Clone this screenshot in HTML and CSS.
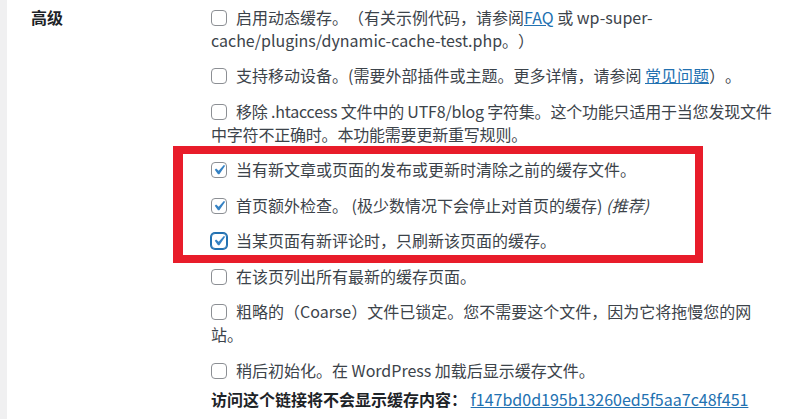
FILE: index.html
```html
<!DOCTYPE html>
<html lang="zh-CN">
<head>
<meta charset="utf-8">
<title>高级</title>
<link rel="stylesheet" href="styles.css">
</head>
<body>
<div class="page">
  <div class="row">
    <div class="th">高级</div>
    <div class="td">
      <label class="opt"><span class="cb"></span><span>启用动态缓存。（有关示例代码，请参阅</span><a href="#">FAQ</a><span> 或 wp-super-</span><span>cache/plugins/dynamic-cache-test.php。）</span></label>
      <label class="opt"><span class="cb"></span>支持移动设备。(需要外部插件或主题。更多详情，请参阅 <a href="#">常见问题</a>）。</label>
      <label class="opt tight"><span class="cb"></span>移除 .htaccess 文件中的 UTF8/blog 字符集。这个功能只适用于当您发现文件中字符不正确时。本功能需要更新重写规则。</label>
      <label class="opt"><span class="cb checked"><svg viewBox="0 0 20 20"><path d="M14.83 4.89l1.34.94-5.81 8.38H9.02L5.78 9.67l1.34-1.25 2.57 2.4z"/></svg></span>当有新文章或页面的发布或更新时清除之前的缓存文件。</label>
      <label class="opt"><span class="cb checked"><svg viewBox="0 0 20 20"><path d="M14.83 4.89l1.34.94-5.81 8.38H9.02L5.78 9.67l1.34-1.25 2.57 2.4z"/></svg></span>首页额外检查。 (极少数情况下会停止对首页的缓存) <em>(推荐)</em></label>
      <label class="opt"><span class="cb checked focus"><svg viewBox="0 0 20 20"><path d="M14.83 4.89l1.34.94-5.81 8.38H9.02L5.78 9.67l1.34-1.25 2.57 2.4z"/></svg></span>当某页面有新评论时，只刷新该页面的缓存。</label>
      <label class="opt"><span class="cb"></span>在该页列出所有最新的缓存页面。</label>
      <label class="opt"><span class="cb"></span>粗略的（Coarse）文件已锁定。您不需要这个文件，因为它将拖慢您的网站。</label>
      <label class="opt"><span class="cb"></span>稍后初始化。在 WordPress 加载后显示缓存文件。</label>
      <p class="note"><strong>访问这个链接将不会显示缓存内容：</strong> <a href="#">f147bd0d195b13260ed5f5aa7c48f451</a></p>
    </div>
  </div>
  <div class="highlight"></div>
</div>
</body>
</html>
```
FILE: styles.css
```css
html, body {
  margin: 0;
  padding: 0;
  background: #ffffff;
}
body {
  font-family: "Noto Sans CJK SC", sans-serif;
  font-size: 16px;
  line-height: 23px;
  color: #3c434a;
  text-spacing-trim: space-all;
}
.page {
  position: relative;
  height: 419px;
  overflow: hidden;
  border-left: 7px solid #f0f0f1;
}
.row {
  display: flex;
  padding-top: 5.5px;
}
.th {
  width: 180px;
  padding-left: 24px;
  flex: none;
  font-weight: 700;
  color: #1d2327;
}
.td {
  width: 565px;
  flex: none;
}
.opt {
  display: block;
  margin-bottom: 12.5px;
}
.tight {
  letter-spacing: -0.2px;
}
.cb {
  display: inline-block;
  box-sizing: border-box;
  width: 16px;
  height: 16px;
  border: 1px solid #8c8f94;
  border-radius: 4px;
  background: #fff;
  margin-right: 9px;
  vertical-align: -2px;
  position: relative;
}
.cb svg {
  position: absolute;
  left: -3px;
  top: -3px;
  width: 20px;
  height: 20px;
  fill: #3582c4;
}
.cb.focus {
  border-color: #2271b1;
  box-shadow: 0 0 0 1px #2271b1;
}
a {
  color: #2271b1;
  text-decoration: underline;
}
em {
  font-style: italic;
}
.note {
  margin: -6px 0 0;
}
.note strong {
  color: #1d2327;
  font-weight: 700;
}
.highlight {
  position: absolute;
  left: 166px;
  top: 146px;
  width: 512px;
  height: 101px;
  border-style: solid;
  border-color: #e81c2a;
  border-width: 8px 8px 8px 10px;
}
```
